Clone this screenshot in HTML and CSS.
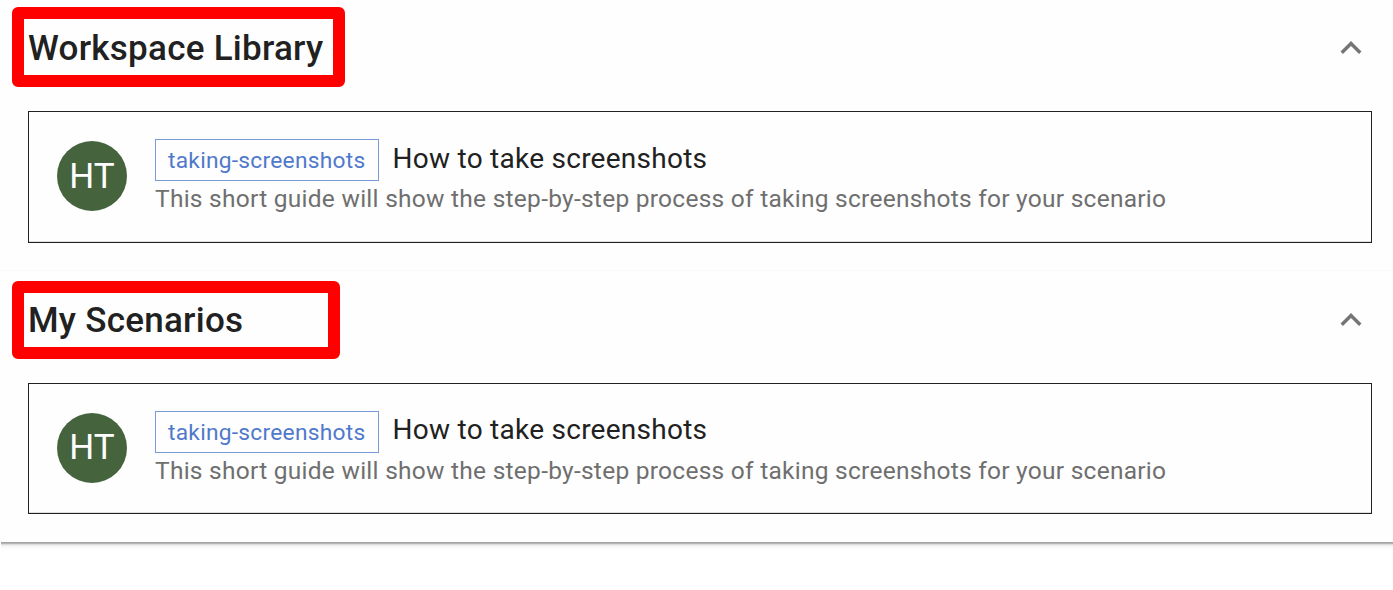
FILE: index.html
```html
<!DOCTYPE html>
<html lang="en">
<head>
<meta charset="utf-8">
<title>Scenarios</title>
<link rel="stylesheet" href="styles.css">
</head>
<body>
<main class="panel">
  <section class="section">
    <header class="section-header">
      <h2 class="section-title">Workspace Library<span class="highlight highlight-library"></span></h2>
      <svg class="chevron" viewBox="0 0 24 24"><path d="M12 8l-6 6 1.41 1.41L12 10.83l4.59 4.58L18 14z"/></svg>
    </header>
    <article class="card">
      <div class="avatar">HT</div>
      <div class="card-text">
        <div class="card-heading"><span class="tag">taking-screenshots</span><span class="card-title">How to take screenshots</span></div>
        <p class="description">This short guide will show the step-by-step process of taking screenshots for your scenario</p>
      </div>
    </article>
  </section>
  <section class="section section-personal">
    <header class="section-header">
      <h2 class="section-title">My Scenarios<span class="highlight highlight-scenarios"></span></h2>
      <svg class="chevron" viewBox="0 0 24 24"><path d="M12 8l-6 6 1.41 1.41L12 10.83l4.59 4.58L18 14z"/></svg>
    </header>
    <article class="card">
      <div class="avatar">HT</div>
      <div class="card-text">
        <div class="card-heading"><span class="tag">taking-screenshots</span><span class="card-title">How to take screenshots</span></div>
        <p class="description">This short guide will show the step-by-step process of taking screenshots for your scenario</p>
      </div>
    </article>
  </section>
</main>
<div class="panel-shadow"></div>
</body>
</html>
```
FILE: styles.css
```css
* { box-sizing: border-box; }
html { background: #fff; }
body {
  margin: 0;
  height: 590px;
  color: #212121;
  font-family: Roboto, "Liberation Sans", sans-serif;
  letter-spacing: 0.2625px;
}
.panel {
  height: 542px;
  background: #fefefe;
}
/* bottom edge of the raised panel */
.panel-shadow {
  height: 8px;
  margin-left: 1px;
  background: linear-gradient(#a4a4a4 0 1px, #b4b4b4 1px 2px, #dcdcdc 2px 3px, #f0f0f0 3px 4px, #f6f6f6 4px 5px, #fafafa 5px 6px, #fdfdfd 6px 8px);
}
.section { height: 270px; }
.section-personal {
  height: 272px;
  border-top: 1px solid #f8f8f8;
}
.section-header {
  display: flex;
  align-items: center;
  justify-content: space-between;
  height: 96px;
  padding: 0 21px 0 28px;
}
.section-personal .section-header { height: 98px; }
.section-title {
  position: relative;
  margin: 0;
  padding-top: 2px;
  font-size: 35px;
  font-weight: 500;
  line-height: 56px;
}
.highlight {
  position: absolute;
  left: -16px;
  border: 12px solid #f00;
  border-radius: 6px;
}
.highlight-library { top: -12px; width: 333px; height: 80px; }
.highlight-scenarios { top: -10px; width: 328px; height: 78px; }
.chevron { width: 42px; height: 42px; fill: #757575; }
.card {
  display: flex;
  align-items: center;
  height: 132px;
  margin: 15px 21px 0 28px;
  padding: 0 28px;
  border: 1px solid #212121;
  box-shadow: inset 0 -1px #dedede;
}
.section-personal .card { height: 131px; margin-top: 14px; }
.avatar {
  display: flex;
  align-items: center;
  justify-content: center;
  width: 70px;
  height: 70px;
  margin: -2px 28px 0 0;
  border-radius: 50%;
  background: #45633c;
  color: #fff;
  font-size: 35px;
  letter-spacing: 0;
}
.card-text { padding-top: 1px; }
.card-heading { display: flex; gap: 14px; height: 42px; }
.tag {
  height: 42px;
  padding: 0 12px;
  border: 1px solid #7b9ad9;
  color: #5079cb;
  font-size: 22.75px;
  line-height: 41px;
}
.card-title { font-size: 28px; line-height: 39px; }
.section-personal .card-title { line-height: 37px; }
.description {
  margin: 0;
  color: #6f6f6f;
  font-size: 24.5px;
  line-height: 35px;
}
```
